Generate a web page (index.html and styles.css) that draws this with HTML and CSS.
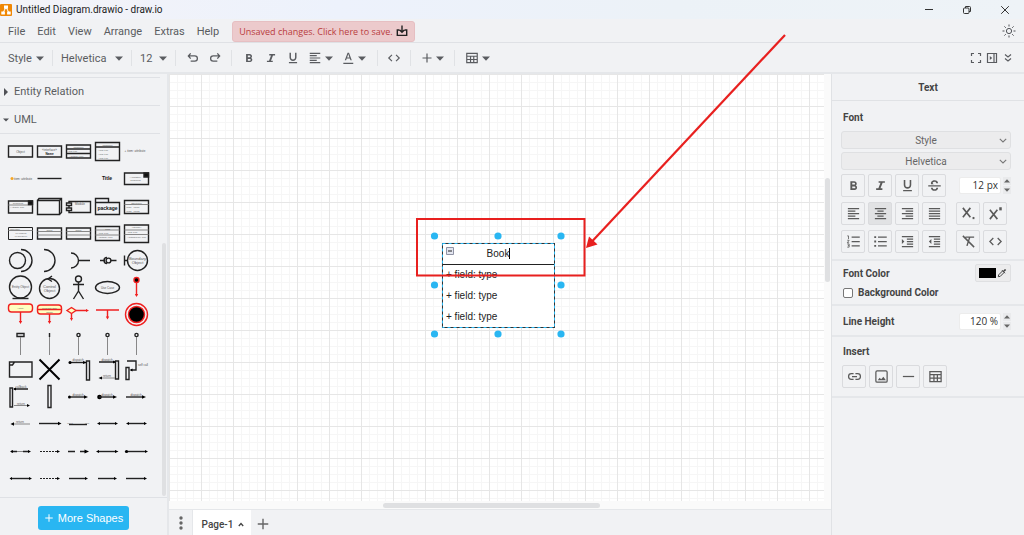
FILE: index.html
```html
<!DOCTYPE html>
<html lang="en">
<head>
<meta charset="utf-8">
<title>Untitled Diagram.drawio - draw.io</title>
<link rel="stylesheet" href="styles.css">
</head>
<body>
<svg class="defs" aria-hidden="true">
  <symbol id="caret" viewBox="0 0 8 5"><path d="M0 .5h8L4 4.700z" fill="currentColor"/></symbol>
  <symbol id="chev" viewBox="0 0 8 5"><path d="M.8.8 4 4 7.200.8" fill="none" stroke="currentColor" stroke-width="1.100"/></symbol>
  <symbol id="bold" viewBox="0 0 24 24"><path d="M15.600 11.800c1-.7 1.600-1.800 1.600-2.800 0-2.300-1.700-4-4-4H7v14h7c2.100 0 3.700-1.700 3.700-3.800 0-1.500-.8-2.800-2.100-3.400zM10 7.500h3a1.500 1.500 0 0 1 0 3h-3zm3.500 9H10v-3h3.500a1.500 1.500 0 0 1 0 3z" fill="currentColor"/></symbol>
  <symbol id="italic" viewBox="0 0 24 24"><path d="M9 5v2.500h3l-3.400 9H5V19h10v-2.500h-3l3.400-9H19V5z" fill="currentColor"/></symbol>
  <symbol id="under" viewBox="0 0 24 24"><path d="M12 17c3.300 0 6-2.700 6-6V3h-2.500v8a3.500 3.500 0 0 1-7 0V3H6v8c0 3.300 2.700 6 6 6zm-7 2v2h14v-2z" fill="currentColor"/></symbol>
  <symbol id="strike" viewBox="0 0 24 24"><path d="M2 11.500h20v2H2zM6.500 10C5.500 6 8.500 3.500 12 3.500s5.700 1.800 5.700 5h-2.900c0-1.500-1-2.500-2.800-2.500-2.300 0-3.600 1.400-2.300 3.200l1.300.8zM6.300 15.500h2.900c0 1.700 1.300 2.600 2.900 2.600s2.800-.9 2.800-2.600h2.900c0 3.300-2.400 5-5.700 5s-5.800-1.700-5.800-5z" fill="currentColor"/></symbol>
  <symbol id="left" viewBox="0 0 24 24"><path d="M3 4h18M3 8h12M3 12h18M3 16h12M3 20h18" stroke="currentColor" stroke-width="2"/></symbol>
  <symbol id="center" viewBox="0 0 24 24"><path d="M3 4h18M7 8h10M3 12h18M7 16h10M3 20h18" stroke="currentColor" stroke-width="2"/></symbol>
  <symbol id="right" viewBox="0 0 24 24"><path d="M3 4h18M9 8h12M3 12h18M9 16h12M3 20h18" stroke="currentColor" stroke-width="2"/></symbol>
  <symbol id="justify" viewBox="0 0 24 24"><path d="M3 4h18M3 8h18M3 12h18M3 16h18M3 20h18" stroke="currentColor" stroke-width="2"/></symbol>
  <symbol id="code" viewBox="0 0 24 24"><path d="M8.500 6.500 3 12l5.500 5.500M15.500 6.500 21 12l-5.500 5.500" fill="none" stroke="currentColor" stroke-width="2"/></symbol>
  <symbol id="table" viewBox="0 0 24 24"><path d="M3 4h18v16H3zM3 9h18M3 14.500h18M9.500 9v11M15 9v11" fill="none" stroke="currentColor" stroke-width="2"/></symbol>
  <symbol id="undo" viewBox="0 0 24 24"><path d="M8 4 4 8.500 8 13M4.500 8.500H15a4.500 4.500 0 0 1 0 9H8" fill="none" stroke="currentColor" stroke-width="2.200"/></symbol>
  <symbol id="plus" viewBox="0 0 24 24"><path d="M12 3v18M3 12h18" stroke="currentColor" stroke-width="2.400"/></symbol>
  <symbol id="indent" viewBox="0 0 24 24"><path d="M3 4h18M11 8h10M11 12h10M11 16h10M3 20h18" stroke="currentColor" stroke-width="2"/><path d="m3 8 4 4-4 4z" fill="currentColor"/></symbol>
  <symbol id="outdent" viewBox="0 0 24 24"><path d="M3 4h18M11 8h10M11 12h10M11 16h10M3 20h18" stroke="currentColor" stroke-width="2"/><path d="m7 8-4 4 4 4z" fill="currentColor"/></symbol>
</svg>

<div class="app">
  <header class="titlebar">
    <svg class="logo" viewBox="0 0 12 12"><rect width="12" height="12" rx="1" fill="#f08705"/><path d="M6 3 3 9M6 3l3 6" stroke="#fff" stroke-width="1"/><path d="M4 1.500h4v3.200H4zM1.300 7.500h3.600v3H1.300zM7.100 7.500h3.600v3H7.100z" fill="#fff"/></svg>
    <h1 class="title">Untitled Diagram.drawio - draw.io</h1>
    <div class="window-buttons">
      <button aria-label="Minimize"><svg viewBox="0 0 10 10"><path d="M1 4.500h8"/></svg></button>
      <button aria-label="Restore"><svg viewBox="0 0 10 10"><rect x="1.500" y="3" width="5.500" height="5.500" rx="1"/><path d="M3.500 3V1.500h4q1 0 1 1v4H7"/></svg></button>
      <button aria-label="Close"><svg viewBox="0 0 10 10"><path d="m1.200 1.200 7.600 7.600M8.800 1.200 1.200 8.800"/></svg></button>
    </div>
  </header>

  <nav class="menubar">
    <button>File</button><button>Edit</button><button>View</button><button>Arrange</button><button>Extras</button><button>Help</button>
    <button class="unsaved">Unsaved changes. Click here to save.
      <svg viewBox="0 0 12 12"><path d="M3.500 5H1.300v5.400h9.400V5H8.500M6 .5v6.500M3.700 5 6 7.300 8.300 5" fill="none" stroke="#222" stroke-width="1.400"/></svg></button>
    <button class="theme" aria-label="Appearance"><svg viewBox="0 0 14 14"><circle cx="7" cy="7" r="2.600"/><path d="M7 .5v2M7 11.500v2M.5 7h2M11.500 7h2M2.400 2.400l1.400 1.400M10.200 10.200l1.400 1.400M11.600 2.400l-1.400 1.400M3.800 10.200l-1.400 1.400"/></svg></button>
  </nav>

  <div class="toolbar">
    <div class="group first"><button class="drop">Style<svg class="caret"><use href="#caret"/></svg></button></div>
    <div class="group"><button class="drop">Helvetica<svg class="caret"><use href="#caret"/></svg></button></div>
    <div class="group"><button class="drop">12<svg class="caret"><use href="#caret"/></svg></button></div>
    <div class="group icons"><button aria-label="Undo"><svg class="ic"><use href="#undo"/></svg></button><button aria-label="Redo" class="flip"><svg class="ic"><use href="#undo"/></svg></button></div>
    <div class="group icons format"><button aria-label="Bold"><svg class="ic"><use href="#bold"/></svg></button><button aria-label="Italic"><svg class="ic"><use href="#italic"/></svg></button><button aria-label="Underline"><svg class="ic"><use href="#under"/></svg></button><button class="drop tight" aria-label="Align"><svg class="ic"><use href="#left"/></svg><svg class="caret"><use href="#caret"/></svg></button><button class="drop tight" aria-label="Font color"><svg class="ic" viewBox="0 0 24 24"><path d="M4 20h17v2.200H4zM11.300 3 6.500 16h2.300l1-3h5.400l1 3h2.300L13.700 3zm-.8 8 2-5.800 2 5.800z" fill="currentColor"/></svg><svg class="caret"><use href="#caret"/></svg></button></div>
    <div class="group icons mid"><button aria-label="HTML"><svg class="ic"><use href="#code"/></svg></button></div>
    <div class="group icons mid"><button class="drop tight" aria-label="Insert"><svg class="ic small"><use href="#plus"/></svg><svg class="caret"><use href="#caret"/></svg></button></div>
    <div class="group icons mid last"><button class="drop tight" aria-label="Table"><svg class="ic"><use href="#table"/></svg><svg class="caret"><use href="#caret"/></svg></button></div>
    <div class="toolbar-end">
      <button aria-label="Fullscreen"><svg viewBox="0 0 12 12"><path d="M1.500 4V1.500H4M8 1.500h2.500V4M10.500 8v2.500H8M4 10.500H1.500V8"/></svg></button>
      <button aria-label="Format"><svg viewBox="0 0 12 12"><path d="M1.500 1.500h9v9h-9zM8 1.500v9"/><path d="m3.800 4 2.400 2-2.400 2z" fill="currentColor" stroke="none"/></svg></button>
      <button aria-label="Collapse"><svg viewBox="0 0 12 12"><path d="M3 2.500 6 5l3-2.500M3 6.500 6 9l3-2.500"/></svg></button>
    </div>
  </div>

  <div class="main">
    <aside class="sidebar">
      <div class="library">
        <div class="library-list">
          <button class="section"><svg viewBox="0 0 6 8"><path d="M1 0v8l4-4z"/></svg>Entity Relation</button>
          <button class="section"><svg viewBox="0 0 6 8"><path d="M0 2.500h6L3 5.500z"/></svg>UML</button>
          <div class="shapes">
            <button aria-label="Object"><svg viewBox="0 0 29 27"><path d="M2.500 8h24v11h-24z"/><text x="14.500" y="14.500" class="i">Object</text></svg></button>
            <button aria-label="Interface"><svg viewBox="0 0 29 27"><path d="M2.500 8h24v11h-24z"/><text x="14.500" y="12.500" class="i">«interface»</text><text x="14.500" y="16.500" class="b">Name</text></svg></button>
            <button aria-label="Class 1"><svg viewBox="0 0 29 27"><path d="M2.500 7h24v13h-24zM2.500 11h24M2.500 15.500h24"/><text x="14.500" y="10">Classname</text><text x="8" y="14.200">+ field: type</text><text x="12" y="19">+ method(): type</text></svg></button>
            <button aria-label="Class 2"><svg viewBox="0 0 29 27"><path d="M2.500 4.500h24v18h-24zM2.500 9h24"/><text x="14.500" y="7.800">Classname</text><text x="10" y="12.500">+ field: type</text><text x="10" y="16.500">+ field: type</text><text x="10" y="21">+ field: type</text></svg></button>
            <button aria-label="Item 1"><svg viewBox="0 0 29 27"><text x="13" y="14" class="i">+ item: attribute</text></svg></button>

            <button aria-label="Item 2"><svg viewBox="0 0 29 27"><circle cx="6" cy="13.500" r="1.500" fill="#f5a623" stroke="none"/><text x="17" y="14.500" class="i">item: attribute</text></svg></button>
            <button aria-label="Divider"><svg viewBox="0 0 29 27"><path d="M2.500 13.500h24"/></svg></button>
            <button aria-label="Spacer"><svg viewBox="0 0 29 27"></svg></button>
            <button aria-label="Title"><svg viewBox="0 0 29 27"><text x="14" y="14.500" class="t">Title</text></svg></button>
            <button aria-label="Component"><svg viewBox="0 0 29 27"><path d="M2.500 8h24v11.500h-24z"/><path d="M22 8h4.500v4H22z" fill="#111"/><text x="13.500" y="13">«Annotation»</text><text x="13.500" y="16">Component</text></svg></button>

            <button aria-label="Component with attributes"><svg viewBox="0 0 29 27"><path d="M2.500 8h24v12h-24z"/><path d="M2.500 12h24" class="thin"/><path d="M22.500 8h4v3.500h-4z" fill="#111"/><text x="12" y="11">Component</text><text x="11" y="15">+ Attribute: Type</text></svg></button>
            <button aria-label="Block"><svg viewBox="0 0 29 27"><path d="M2.500 7.500h22v14h-22zM2.500 7.500 4 5.500h22.500v14l-2 2M24.500 7.500l2-2"/></svg></button>
            <button aria-label="Module"><svg viewBox="0 0 29 27"><path d="M5 8.500h21.500v11H5z"/><path d="M2.500 10h5v2.500h-5zM2.500 15h5v2.500h-5z" fill="#f1f2f4"/><text x="16" y="11.500" class="i">Module</text></svg></button>
            <button aria-label="Package"><svg viewBox="0 0 29 27"><path d="M2.500 9.500h24v12h-24zM2.500 9.500v-4h13v4"/><text x="14.500" y="16.500" class="t">package</text></svg></button>
            <button aria-label="Object 2"><svg viewBox="0 0 29 27"><path d="M2.500 7.500h24v13h-24z"/><path d="M2.500 11.500h24" class="thin"/><text x="14.500" y="10.500">Object:Type</text><text x="11" y="15">field1 = value1</text><text x="11" y="18.500">field2 = value2</text></svg></button>

            <button aria-label="Table"><svg viewBox="0 0 29 27"><path d="M2.500 7.500h24v12h-24z" class="med"/><path d="M2.500 10.500h24" class="thin"/><text x="9" y="10">Tablename</text><text x="15" y="13.500">PK uniqueId</text><text x="15" y="17">FK foreignKey</text></svg></button>
            <button aria-label="Object name"><svg viewBox="0 0 29 27"><path d="M2.500 8h24v11h-24z"/><path d="M2.500 11.500h24M2.500 15h24" class="thin"/><text x="14.500" y="11">Object</text></svg></button>
            <button aria-label="Classname"><svg viewBox="0 0 29 27"><path d="M2.500 8h24v11h-24z"/><path d="M2.500 11.500h24M2.500 15h24" class="thin"/><text x="14.500" y="11">Object</text></svg></button>
            <button aria-label="Class 3"><svg viewBox="0 0 29 27"><path d="M2.500 6.500h24v14h-24z"/><path d="M2.500 10h24M2.500 15h24" class="thin"/><text x="14.500" y="9.500">Class</text><text x="10" y="13.500">+ field: Type</text><text x="12" y="18">+ method(): Type</text></svg></button>
            <button aria-label="Interface 2"><svg viewBox="0 0 29 27"><path d="M2.500 5h24v17.500h-24z"/><path d="M2.500 10h24M2.500 14.500h24" class="thin"/><text x="14.500" y="8">«Interface»</text><text x="10" y="13">+ field: Type</text><text x="14.500" y="18">+ method(Type): Type</text></svg></button>

            <button aria-label="Provided/required interface"><svg viewBox="0 0 29 27"><circle cx="11.500" cy="13.500" r="8"/><path d="M15 2.500a11 11 0 0 1 0 22"/></svg></button>
            <button aria-label="Required interface"><svg viewBox="0 0 29 27"><path d="M9 2.500a11 11 0 0 1 0 22"/></svg></button>
            <button aria-label="Lollipop"><svg viewBox="0 0 29 27"><path d="M7 6a7.500 7.500 0 0 1 0 15M14.500 13.500h11.500"/></svg></button>
            <button aria-label="Interface assembly"><svg viewBox="0 0 29 27"><path d="M7 13.500h5M17.500 13.500h6M14 10.500a3 3 0 0 0 0 6"/><circle cx="15.500" cy="13.500" r="2.400"/></svg></button>
            <button aria-label="Boundary object"><svg viewBox="0 0 29 27"><circle cx="15.500" cy="13.500" r="10"/><path d="M2.500 8.500v10M2.500 13.500h3"/><text x="15.500" y="12.500" class="m">Boundary</text><text x="15.500" y="16.500" class="m">Object</text></svg></button>

            <button aria-label="Entity object"><svg viewBox="0 0 29 27"><circle cx="14.500" cy="13" r="11"/><path d="M6.500 24.500h16"/><text x="14.500" y="14" class="i">Entity Object</text></svg></button>
            <button aria-label="Control object"><svg viewBox="0 0 29 27"><circle cx="14.500" cy="14.500" r="10"/><path d="m17 2-4 3 4 2.500"/><text x="14.500" y="13.500" class="m">Control</text><text x="14.500" y="18" class="m">Object</text></svg></button>
            <button aria-label="Actor"><svg viewBox="0 0 29 27"><circle cx="14.500" cy="5" r="3"/><path d="M14.500 8v9M9 10.500h11M14.500 17 9.500 25M14.500 17l5 8"/></svg></button>
            <button aria-label="Use case"><svg viewBox="0 0 29 27"><ellipse cx="14.500" cy="13.500" rx="12" ry="6"/><text x="14.500" y="14.500" class="i">Use Case</text></svg></button>
            <button aria-label="Start" class="red"><svg viewBox="0 0 29 27"><circle cx="14.500" cy="6" r="2.500" fill="#000"/><path d="M14.500 8.500v13"/><path d="M12.800 20h3.400l-1.700 3z" class="f"/></svg></button>

            <button aria-label="Activity" class="red"><svg viewBox="0 0 29 27"><rect x="2.500" y="3" width="24" height="8" rx="3" fill="#ffffc0"/><path d="M14.500 11v10"/><path d="M12.800 20h3.400l-1.700 3z" class="f"/><text x="14.500" y="8">Activity</text></svg></button>
            <button aria-label="Composite state" class="red"><svg viewBox="0 0 29 27"><rect x="2.500" y="4" width="24" height="9" rx="3" fill="#ffffc0"/><path d="M2.500 8.500h24M14.500 13v8"/><path d="M12.800 20h3.400l-1.700 3z" class="f"/><text x="14.500" y="7.500">Composite State</text><text x="14.500" y="11.800">Subtitle</text></svg></button>
            <button aria-label="Condition" class="red"><svg viewBox="0 0 29 27"><path d="m3 9.500 4.500-3 4.500 3-4.500 3z" fill="#ffffc0"/><path d="M12 9.500h11M7.500 12.500v5"/><path d="M22 8l3 1.500-3 1.500zM6 17h3l-1.500 3z" class="f"/></svg></button>
            <button aria-label="Fork" class="red"><svg viewBox="0 0 29 27"><path d="M3 9h23M14.500 9v7"/><path d="M12.800 15.500h3.400l-1.700 3z" class="f"/></svg></button>
            <button aria-label="End" class="red"><svg viewBox="0 0 29 27"><circle cx="14.500" cy="13.500" r="11"/><circle cx="14.500" cy="13.500" r="8" fill="#000"/></svg></button>

            <button aria-label="Lifeline"><svg viewBox="0 0 29 27"><path d="M11 4.500h7v3h-7z"/><path d="M14.500 8v18" class="thin"/></svg></button>
            <button aria-label="Actor lifeline"><svg viewBox="0 0 29 27"><path d="M14.500 4v4"/><path d="M14.500 8v18" class="thin"/></svg></button>
            <button aria-label="Boundary lifeline"><svg viewBox="0 0 29 27"><circle cx="14.500" cy="6" r="1.600"/><path d="M14.500 8v18" class="thin"/></svg></button>
            <button aria-label="Entity lifeline"><svg viewBox="0 0 29 27"><circle cx="14.500" cy="6" r="1.600"/><path d="M14.500 8v18" class="thin"/></svg></button>
            <button aria-label="Control lifeline"><svg viewBox="0 0 29 27"><circle cx="14.500" cy="6" r="1.600"/><path d="M14.500 8v18" class="thin"/></svg></button>

            <button aria-label="Frame"><svg viewBox="0 0 29 27"><path d="M3.500 6h22.500v15H3.500zM3.500 9h3l2-3"/></svg></button>
            <button aria-label="Destruction"><svg viewBox="0 0 29 27"><path d="m4.500 3.500 20 20M24.500 3.500l-20 20" class="thick"/></svg></button>
            <button aria-label="Invocation"><svg viewBox="0 0 29 27"><path d="M22.500 5h3v19h-3z"/><path d="M6 6.500h16"/><circle cx="6" cy="6.500" r="1.500" class="f"/><path d="M19 5l3.500 1.500L19 8z" class="f"/><text x="14" y="5" class="i">dispatch</text></svg></button>
            <button aria-label="Synchronous invocation"><svg viewBox="0 0 29 27"><path d="M22.500 5h3v18h-3zM6 6h16"/><path d="M7 22h15" class="thin"/><path d="M20 4.500 23 6l-3 1.500zM9 20.500 5.500 22 9 23.500z" class="f"/><text x="14" y="4.500" class="i">dispatch</text><text x="14" y="21" class="i">return</text></svg></button>
            <button aria-label="Self call"><svg viewBox="0 0 29 27"><path d="M4 11.500h3v12H4zM5 5h9v9H9"/><path d="M10.500 12.500 7.500 14l3 1.500z" class="f"/><text x="21" y="9.500" class="i">self call</text></svg></button>

            <button aria-label="Callback"><svg viewBox="0 0 29 27"><path d="M4 5h2.500v19H4zM8 6h14"/><path d="M8 22.500h14" class="thin"/><path d="M10 4.500 7 6l3 1.500zM21 21l3 1.500-3 1.500z" class="f"/><text x="15" y="4.500" class="i">callback</text><text x="15" y="21.500" class="i">return</text></svg></button>
            <button aria-label="Activation"><svg viewBox="0 0 29 27"><path d="M13 2.500h3v22h-3z"/></svg></button>
            <button aria-label="Found message 1"><svg viewBox="0 0 29 27"><circle cx="5.500" cy="14" r="1.500" class="f"/><path d="M6 14h15"/><path d="M20 12.200 24 14l-4 1.800z" class="f"/><text x="14" y="12.500" class="i">dispatch</text></svg></button>
            <button aria-label="Found message 2"><svg viewBox="0 0 29 27"><circle cx="6.500" cy="14" r="2.300" class="f"/><path d="M6 14h15"/><path d="M20 12.200 24 14l-4 1.800z" class="f"/><text x="14" y="12.500" class="i">dispatch</text></svg></button>
            <button aria-label="Message"><svg viewBox="0 0 29 27"><path d="M4 14h18"/><path d="M20 12.200 24 14l-4 1.800z" class="f"/><text x="14" y="12.500" class="i">dispatch</text></svg></button>

            <button aria-label="Return"><svg viewBox="0 0 29 27"><path d="M7 14h17" class="thin"/><path d="M8 12.200 4.500 14 8 15.800z" class="f"/><text x="14" y="12.500" class="i">return</text></svg></button>
            <button aria-label="Relation 1"><svg viewBox="0 0 29 27"><path d="M4 13.500h20"/><path d="M23 11.700l3.500 1.800-3.500 1.800z" class="f"/></svg></button>
            <button aria-label="Association 1"><svg viewBox="0 0 29 27"><path d="M5 14.500h18"/><text x="6" y="13.500">parent</text><text x="23" y="13.500">child</text></svg></button>
            <button aria-label="Association 2"><svg viewBox="0 0 29 27"><path d="M6 13.500h17"/><path d="M7 12 4 13.500 7 15zM22 12l3 1.500-3 1.500z" class="f"/></svg></button>
            <button aria-label="Aggregation 1"><svg viewBox="0 0 29 27"><path d="M6 13.500h17"/><path d="M7 12 4 13.500 7 15zM22 12l3 1.500-3 1.500z" class="f"/></svg></button>

            <button aria-label="Composition 1"><svg viewBox="0 0 29 27"><path d="M5 13.500h6M17 13.500h6"/><path d="M11 13.500h6" class="thin"/><path d="M7 12 4 13.500 7 15zM22 12l3 1.500-3 1.500z" class="f"/></svg></button>
            <button aria-label="Dependency 1"><svg viewBox="0 0 29 27"><path d="M5 13.500h17" class="dash"/><path d="M22 12l3 1.500-3 1.500z" class="f"/></svg></button>
            <button aria-label="Dependency 2"><svg viewBox="0 0 29 27"><path d="M4 13.500h7M16 13.500h6"/><path d="M20.500 11.500 25 13.500l-4.500 2z" class="f"/></svg></button>
            <button aria-label="Aggregation 2"><svg viewBox="0 0 29 27"><path d="M5 13.500h18"/><path d="M6 12 3 13.500 6 15zM22 12l3.500 1.500L22 15z" class="f"/></svg></button>
            <button aria-label="Composition 2"><svg viewBox="0 0 29 27"><path d="M5 13.500h18"/><circle cx="4.500" cy="13.500" r="1.600" class="f"/><path d="M23 12l3 1.500-3 1.500z" class="f"/></svg></button>

            <button aria-label="Association 3"><svg viewBox="0 0 29 27"><path d="M5 13.500h18"/><path d="M6 12 3.500 13.500 6 15zM23 12l3 1.500-3 1.500z" class="f"/></svg></button>
            <button aria-label="Dependency 3"><svg viewBox="0 0 29 27"><path d="M5 13.500h17" class="dash"/><path d="M22 12l3 1.500-3 1.500z" class="f"/></svg></button>
            <button aria-label="Relation 2"><svg viewBox="0 0 29 27"><path d="M5 13.500h17"/><path d="M21 12l3 1.500-3 1.500z" class="f"/></svg></button>
            <button aria-label="Relation 3"><svg viewBox="0 0 29 27"><path d="M5 13.500h17"/><path d="M21 12l3 1.500-3 1.500z" class="f"/></svg></button>
            <button aria-label="Relation 4"><svg viewBox="0 0 29 27"><path d="M4 13.500h19"/><path d="M22 12l3 1.500-3 1.500z" class="f"/></svg></button>
          </div>
        </div>
        <div class="library-scroll"><div class="thumb"></div></div>
      </div>
      <div class="more"><button class="more-button"><svg viewBox="0 0 24 24"><use href="#plus"/></svg>More Shapes</button></div>
    </aside>

    <section class="workspace">
      <div class="stage">
        <div class="canvas">
          <div class="node">
            <div class="node-title"><svg class="collapse" viewBox="0 0 8 8"><path d="M.5.5h7v7h-7z" fill="#e4e6f0" stroke="#8f93a5"/><path d="M2 4h4" stroke="#222"/></svg><span class="editing">Book</span></div>
            <div class="field">+ field: type</div>
            <div class="field">+ field: type</div>
            <div class="field">+ field: type</div>
            <svg class="handles" viewBox="0 0 136 108"><rect x="12.500" y="12.500" width="112" height="84" fill="none" stroke="#333"/><rect x="12.500" y="12.500" width="112" height="84" fill="none" stroke="#29b6f2" stroke-dasharray="3 3"/><g fill="#29b6f2"><circle cx="4.500" cy="5" r="3.600"/><circle cx="68" cy="5" r="3.600"/><circle cx="131" cy="5" r="3.600"/><circle cx="4.500" cy="54" r="3.600"/><circle cx="131" cy="54" r="3.600"/><circle cx="4.500" cy="103" r="3.600"/><circle cx="68" cy="103" r="3.600"/><circle cx="131" cy="103" r="3.600"/></g></svg>
          </div>
        </div>
        <div class="vscroll"><div class="thumb"></div></div>
        <div class="hscroll"><div class="thumb"></div></div>
      </div>
      <footer class="pages">
        <button class="dots" aria-label="Pages"><svg viewBox="0 0 4 14"><circle cx="2" cy="2" r="1.700"/><circle cx="2" cy="7" r="1.700"/><circle cx="2" cy="12" r="1.700"/></svg></button>
        <button class="tab">Page-1<svg viewBox="0 0 6 5"><path d="M.8 4 3 1.500 5.200 4" fill="none" stroke="currentColor" stroke-width="1.300"/></svg></button>
        <button class="add" aria-label="Insert page"><svg viewBox="0 0 24 24"><use href="#plus"/></svg></button>
      </footer>
    </section>

    <aside class="panel">
      <h2 class="panel-title">Text</h2>
      <section class="block font">
        <h3>Font</h3>
        <label class="select"><select aria-label="Style"><option>Style</option></select><svg><use href="#chev"/></svg></label>
        <label class="select"><select aria-label="Font family"><option>Helvetica</option></select><svg><use href="#chev"/></svg></label>
        <div class="row">
          <button class="tool" aria-label="Bold"><svg><use href="#bold"/></svg></button><button class="tool" aria-label="Italic"><svg><use href="#italic"/></svg></button><button class="tool" aria-label="Underline"><svg><use href="#under"/></svg></button><button class="tool" aria-label="Strikethrough"><svg><use href="#strike"/></svg></button>
          <div class="number"><input type="text" value="12 px" aria-label="Font size"><span class="steps"><button aria-label="Increase"><svg><use href="#caret"/></svg></button><button aria-label="Decrease"><svg><use href="#caret"/></svg></button></span></div>
        </div>
        <div class="row">
          <button class="tool" aria-label="Left"><svg><use href="#left"/></svg></button><button class="tool on" aria-label="Center"><svg><use href="#center"/></svg></button><button class="tool" aria-label="Right"><svg><use href="#right"/></svg></button><button class="tool" aria-label="Justify"><svg><use href="#justify"/></svg></button>
          <button class="tool far" aria-label="Subscript"><svg viewBox="0 0 24 24"><path d="m3 3 12 15M15 3 3 18" stroke="currentColor" stroke-width="2.600"/><path d="M18.500 17.500h3V21h-3z" fill="currentColor"/></svg></button><button class="tool" aria-label="Superscript"><svg viewBox="0 0 24 24"><path d="m3 6 12 15M15 6 3 21" stroke="currentColor" stroke-width="2.600"/><path d="M18 2h4v5h-4z" fill="currentColor"/></svg></button>
        </div>
        <div class="row">
          <button class="tool" aria-label="Numbered list"><svg viewBox="0 0 24 24"><path d="M9 5h13M9 12h13M9 19h13" stroke="currentColor" stroke-width="2"/><path d="M2 3h2v5M2 10h3l-3 4h3M2 16h3v5H2M3 18.500h2" fill="none" stroke="currentColor" stroke-width="1.300"/></svg></button><button class="tool" aria-label="Bulleted list"><svg viewBox="0 0 24 24"><path d="M8 5h14M8 12h14M8 19h14" stroke="currentColor" stroke-width="2"/><path d="M2 3.500h3v3H2zM2 10.500h3v3H2zM2 17.500h3v3H2z" fill="currentColor"/></svg></button><button class="tool" aria-label="Increase indent"><svg><use href="#indent"/></svg></button><button class="tool" aria-label="Decrease indent"><svg><use href="#outdent"/></svg></button>
          <button class="tool far" aria-label="Clear formatting"><svg viewBox="0 0 24 24"><path d="m3 3 18 18M7 5h14M14 5l-4.500 14" fill="none" stroke="currentColor" stroke-width="2.300"/></svg></button><button class="tool" aria-label="HTML"><svg><use href="#code"/></svg></button>
        </div>
      </section>
      <section class="block colors">
        <div class="line"><span>Font Color</span><button class="swatch" aria-label="Font color"><i></i><svg viewBox="0 0 10 10"><path d="m1.300 8.700.3-1.800 4-4L7.200 4.400l-4 4zM5 2.200l3 3M6.500 3.500l1.400-1.700" fill="none" stroke="currentColor" stroke-width="1"/><path d="M6.300 2.600 8 .9l1.200 1.200L7.500 3.800z" fill="currentColor"/></svg></button></div>
        <label class="check"><input type="checkbox">Background Color</label>
      </section>
      <section class="block height">
        <div class="line"><label for="lh">Line Height</label><div class="number"><input id="lh" type="text" value="120 %"><span class="steps"><button aria-label="Increase line height"><svg><use href="#caret"/></svg></button><button aria-label="Decrease line height"><svg><use href="#caret"/></svg></button></span></div></div>
      </section>
      <section class="block insert">
        <h3>Insert</h3>
        <div class="row">
          <button class="tool" aria-label="Link"><svg viewBox="0 0 24 24"><path d="M10.500 7.500H7a4.500 4.500 0 0 0 0 9h3.500M13.500 7.500H17a4.500 4.500 0 0 1 0 9h-3.500M8 12h8" fill="none" stroke="currentColor" stroke-width="2"/></svg></button><button class="tool" aria-label="Image"><svg viewBox="0 0 24 24"><rect x="3" y="3" width="18" height="18" rx="2" fill="none" stroke="currentColor" stroke-width="2"/><path d="m6 18 3-4 2.500 2.500L15 12.500l4 5.500z" fill="currentColor"/></svg></button><button class="tool" aria-label="Horizontal rule"><svg viewBox="0 0 24 24"><path d="M3 12h18" stroke="currentColor" stroke-width="2"/></svg></button><button class="tool" aria-label="Table"><svg><use href="#table"/></svg></button>
        </div>
      </section>
    </aside>
  </div>

  <svg class="annotation" viewBox="0 0 1024 535" aria-hidden="true"><path d="M417 219h167.500v56.500H417z" fill="none" stroke="#e8201f" stroke-width="2"/><path d="M785 35 592 241.500" stroke="#e8201f" stroke-width="2.200"/><path d="m586 248 3-11.500 8.500 8z" fill="#e8201f"/></svg>
</div>
</body>
</html>
```

FILE: styles.css
```css
* { box-sizing: border-box; }
body {
  margin: 0;
  font-family: Roboto, "Noto Sans", sans-serif;
  font-size: 11px;
  color: #5a5c60;
  background: #f1f2f4;
}
button, input, select { font: inherit; color: inherit; }
button { border: 0; padding: 0; background: none; display: flex; align-items: center; }
h1, h2, h3 { margin: 0; font-size: 11px; }
.defs { position: absolute; width: 0; height: 0; }
.app { position: relative; height: 100vh; display: flex; flex-direction: column; overflow: hidden; }

.titlebar { flex: none; height: 19px; display: flex; align-items: center; gap: 4px; background: linear-gradient(90deg, #f3f3f8, #edf2fc 33%, #ecf2f7 66%, #eef3f7); }
.logo { width: 12px; height: 12px; }
.title { font-size: 10px; font-weight: 400; color: #222; }
.window-buttons { margin-left: auto; display: flex; gap: 28px; padding-right: 14px; }
.window-buttons svg { width: 10px; height: 10px; fill: none; stroke: #333; }

.menubar { flex: none; height: 24px; display: flex; align-items: center; gap: 12px; padding: 1px 8px 0; border-bottom: 1px solid #dfe1e5; }
.unsaved { height: 21px; gap: 3px; margin-left: 1px; padding: 0 6px; border: 1px solid #e6bfc2; border-radius: 3px; background: #eccacc; color: #b93c3e; font-family: "Open Sans", sans-serif; font-size: 9px; }
.unsaved svg { width: 12px; height: 12px; }
.theme { margin-left: auto; }
.theme svg { width: 14px; height: 14px; fill: none; stroke: #505257; }

.toolbar { flex: none; height: 31px; display: grid; grid-template-columns: 53px 79px 44px 56px 146px 33px 44px 44px 1fr; align-items: center; padding-top: 1px; border-bottom: 2px solid #e5e7ea; }
.group { height: 16px; display: flex; align-items: center; padding: 0 8px; border-right: 1px solid #e0e2e5; }
.group.last { border: 0; }
.drop { width: 100%; justify-content: space-between; }
.caret { width: 8px; height: 5px; }
.ic { width: 14px; height: 14px; display: block; }
.ic.small { width: 12px; height: 12px; }
.group.icons { gap: 8px; padding: 0 10px; }
.group.icons.mid { padding: 0; justify-content: center; }
.tight { width: auto; gap: 3px; }
.flip { transform: scaleX(-1); }
.toolbar-end { justify-self: end; display: flex; gap: 4px; padding-right: 10px; }
.toolbar-end svg { width: 12px; height: 12px; display: block; fill: none; stroke: #5a5c60; stroke-width: 1.2px; }

.main { flex: 1; min-height: 0; display: grid; grid-template-columns: 169px 1fr 193px; }

.sidebar { display: flex; flex-direction: column; min-height: 0; border-right: 2px solid #e5e7ea; }
.library { flex: 1; min-height: 0; display: flex; border-bottom: 1px solid #dfe1e5; }
.library-list { width: 160px; padding-top: 3px; display: flex; flex-direction: column; }
.section { flex: none; height: 28px; gap: 5px; padding-left: 3px; border-top: 1px solid #dfe1e5; }
.section svg { width: 6px; height: 8px; fill: #505257; }
.shapes { flex: 1; min-height: 0; display: grid; grid-template-columns: repeat(5, 29px); grid-template-rows: repeat(13, 1fr); padding: 4px 0 5px 6px; border-top: 1px solid #dfe1e5; }
.shapes button { min-height: 0; }
.shapes svg { width: 29px; height: 27px; fill: none; stroke: #222; stroke-width: 1.4px; overflow: visible; }
.shapes text { font-family: "Liberation Sans", Arial, sans-serif; font-size: 2px; fill: #555; stroke: none; text-anchor: middle; }
.shapes .b { font-size: 3px; font-weight: 700; fill: #111; }
.shapes .i { font-size: 3px; }
.shapes .m { font-size: 4px; }
.shapes .t { font-size: 5px; font-weight: 700; fill: #111; }
.shapes .thin { stroke: #888; stroke-width: 1px; }
.shapes .med { stroke-width: 1px; }
.shapes .thick { stroke-width: 2px; stroke: #000; }
.shapes .dash { stroke-width: 1px; stroke-dasharray: 2px 1px; }
.shapes .f { fill: #000; stroke: none; }
.shapes .red svg { stroke: #f02020; }
.shapes .red .f { fill: #f02020; }
.library-scroll { flex: 1; display: flex; flex-direction: column; justify-content: flex-end; padding: 0 1px 1px 2px; }
.thumb { background: #dfe0e2; border-radius: 3px; }
.library-scroll .thumb { height: 60%; }
.more { flex: none; height: 37px; display: flex; align-items: center; justify-content: center; padding-top: 4px; }
.more-button { height: 24px; padding: 0 6px; gap: 4px; border-radius: 3px; background: #29b6f2; color: #fff; font-family: "Liberation Sans", Arial, sans-serif; font-size: 11px; margin-bottom: 2px; }
.more-button svg { width: 10px; height: 10px; }

.workspace { display: flex; flex-direction: column; min-width: 0; }
.stage { flex: 1; min-height: 0; display: grid; grid-template-columns: 1fr 7px; grid-template-rows: 1fr 8px; background: #fafafa; border-bottom: 1px solid #e5e7ea; }
.canvas {
  position: relative;
  background-color: #fff;
  background-image:
    linear-gradient(90deg, #e6e6e6 1px, transparent 1px),
    linear-gradient(#e6e6e6 1px, transparent 1px),
    linear-gradient(90deg, #f6f6f6 1px, transparent 1px),
    linear-gradient(#f6f6f6 1px, transparent 1px);
  background-size: 32px 32px, 32px 32px, 8px 8px, 8px 8px;
}
.vscroll { padding: 104px 1px 0 1px; }
.vscroll .thumb { height: 104px; }
.hscroll { padding: 2px 0 1px 214px; }
.hscroll .thumb { width: 217px; height: 5px; }
.node { position: absolute; left: 273px; top: 169px; width: 113px; background: #fff; color: #222; font-family: "Liberation Sans", Arial, sans-serif; font-size: 10px; }
.node-title { height: 22px; display: flex; align-items: center; justify-content: center; border-bottom: 1px solid #222; }
.collapse { position: absolute; left: 4px; top: 4px; width: 8px; height: 8px; }
.editing { border-right: 1px solid #000; line-height: 11px; }
.field { height: 21px; padding-left: 4px; line-height: 20px; }
.handles { position: absolute; left: -12px; top: -12px; width: 136px; height: 108px; }

.pages { flex: none; height: 25px; display: flex; }
.dots { width: 24px; justify-content: center; border-right: 1px solid #e5e7ea; }
.dots svg { width: 4px; height: 14px; fill: #666; }
.tab { width: 58px; justify-content: center; gap: 5px; background: #fff; font-size: 10px; font-weight: 500; padding: 4px 0 0 2px; color: #444; }
.tab svg { width: 6px; height: 5px; }
.add { padding: 3px 5px 0; }
.add svg { width: 14px; height: 14px; color: #666; }

.panel { border-left: 1px solid #e0e2e5; min-width: 0; color: #444; }
h2, h3 { font-weight: 700; font-size: 10px; }
.panel-title { height: 27px; line-height: 28px; text-align: center; border-bottom: 1px solid #e0e2e5; }
.block { padding: 0 13px 0 9px; border-bottom: 2px solid #e5e7ea; }
.font { height: 160px; display: flex; flex-direction: column; gap: 4px; padding-top: 8px; }
h3 { line-height: 18px; padding-left: 2px; }
.select { display: grid; align-items: center; flex: none; height: 17px; }
.select select, .select svg { grid-area: 1 / 1; }
.select select { appearance: none; width: 100%; height: 18px; padding: 0; border: 1px solid #dfe0e2; border-radius: 3px; background: #ececed; text-align: center; text-align-last: center; font-size: 10px; color: #666; }
.select svg { width: 8px; height: 5px; justify-self: end; margin-right: 4px; pointer-events: none; color: #777; }
.row { display: flex; align-items: center; gap: 3px; height: 24px; }
.tool { width: 24px; height: 23px; justify-content: center; border: 1px solid #dadbde; border-radius: 2px; color: #5a5a5a; }
.tool svg { width: 15px; height: 15px; }
.tool.on { background: #e1e2e4; }
.tool.far { margin-left: auto; }
.font .tool.far + .tool { margin-right: 4px; }
.number { display: flex; align-items: center; gap: 2px; margin-left: auto; }
.number input { width: 42px; height: 17px; padding: 0 2px; border: 1px solid #ececec; border-radius: 2px; background: #fff; text-align: right; font-family: "Open Sans", sans-serif; font-size: 10px; font-weight: 400; color: #333; }
.steps { display: grid; gap: 1px; }
.steps button { width: 8px; height: 8px; justify-content: center; background: #e9eaec; color: #666; }
.steps svg { width: 6px; height: 4px; }
.steps button:first-child svg { transform: rotate(180deg); }
.colors { height: 45px; padding-top: 3px; font-size: 10px; font-weight: 700; }
.line { display: flex; align-items: center; justify-content: space-between; height: 18px; padding-left: 2px; font-size: 10px; font-weight: 700; }
.swatch { width: 36px; height: 18px; justify-content: space-between; padding: 0 3px; border: 1px solid #dfe0e2; border-radius: 2px; background: #ececed; }
.swatch i { width: 17px; height: 10px; background: #000; }
.swatch svg { width: 10px; height: 10px; }
.check { display: flex; align-items: center; gap: 5px; height: 21px; padding-left: 2px; }
.check input { appearance: none; width: 10px; height: 10px; margin: 0; border: 1px solid #777; border-radius: 2px; background: #fff; }
.height { height: 31px; padding-top: 6px; }
.insert { height: 61px; padding-top: 6px; }
.insert .row { margin-top: 3px; padding-left: 1px; }

.annotation { position: absolute; left: 0; top: 0; width: 1024px; height: 535px; pointer-events: none; }
```
